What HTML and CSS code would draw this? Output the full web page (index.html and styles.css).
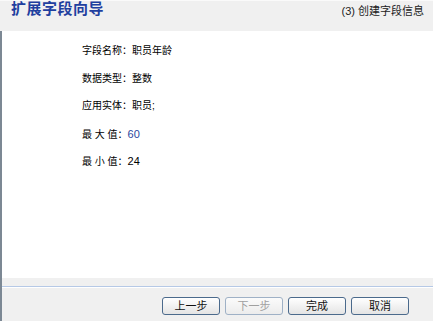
FILE: index.html
```html
<!DOCTYPE html>
<html lang="zh-CN">
<head>
    <meta charset="UTF-8">
    <title>扩展字段向导</title>
    <link rel="stylesheet" href="styles.css">
</head>
<body>
    <div class="header">
        <div class="title">扩展字段向导</div>
        <div class="step">(3) 创建字段信息</div>
    </div>
    <div class="body-wrap">
        <div class="content">
            <div class="row">字段名称：职员年龄</div>
            <div class="row">数据类型：整数</div>
            <div class="row">应用实体：职员;</div>
            <div class="row range">最&nbsp;大&nbsp;值：<span class="num blue">60</span></div>
            <div class="row">最&nbsp;小&nbsp;值：<span class="num">24</span></div>
        </div>
        <div class="footer">
            <div class="buttons">
                <button class="btn">上一步</button>
                <button class="btn" disabled>下一步</button>
                <button class="btn">完成</button>
                <button class="btn">取消</button>
            </div>
        </div>
    </div>
</body>
</html>
```

FILE: styles.css
```css
html, body {
    margin: 0;
    padding: 0;
}

body {
    width: 433px;
    height: 321px;
    display: flex;
    flex-direction: column;
    font-family: "Liberation Sans", "Noto Sans CJK SC", sans-serif;
    font-size: 12px;
    color: #222;
    background-color: #f0f0f0;
    overflow: hidden;
}

.header {
    height: 31px;
    display: flex;
    justify-content: space-between;
    align-items: flex-start;
    background-color: #f0f0f0;
    border-top: 1px solid #fafafa;
    box-sizing: border-box;
}

.title {
    margin-left: 11px;
    font-size: 15px;
    line-height: 16px;
    letter-spacing: 0.5px;
    font-weight: bold;
    color: #1f3f9f;
}

.step {
    margin-right: 9px;
    margin-top: 3px;
    font-size: 11px;
    line-height: 14px;
    color: #222;
}

.body-wrap {
    flex: 1;
    display: flex;
    flex-direction: column;
    border-left: 2px solid #7c8894;
}

.content {
    flex: 1;
    background-color: #fff;
    padding: 6px 0 0 80px;
    font-size: 10px;
    color: #000;
}

.row {
    height: 27.5px;
    line-height: 27px;
}

.row.range {
    margin-top: 1px;
}

.num {
    font-family: "Liberation Sans", sans-serif;
    font-size: 11px;
}

.blue {
    color: #2a48a0;
}

.footer {
    height: 43px;
    box-sizing: border-box;
    padding-top: 8px;
}

.buttons {
    border-top: 1px solid #b6c9e6;
    box-shadow: inset 0 1px 0 #fff;
    display: flex;
    justify-content: flex-end;
    gap: 5px;
    padding: 10px 24px 0 0;
}

.btn {
    width: 58px;
    height: 18px;
    padding: 0;
    font-family: "Liberation Sans", "Noto Sans CJK SC", sans-serif;
    font-size: 11px;
    line-height: 14px;
    color: #111;
    border: 1px solid #4b6a8c;
    border-radius: 3px;
    background: linear-gradient(#ffffff, #e4e4e4);
}

.btn:disabled {
    color: #a0a0a0;
    border-color: #9fb1c6;
    background: linear-gradient(#fbfbfb, #ececec);
}
```
